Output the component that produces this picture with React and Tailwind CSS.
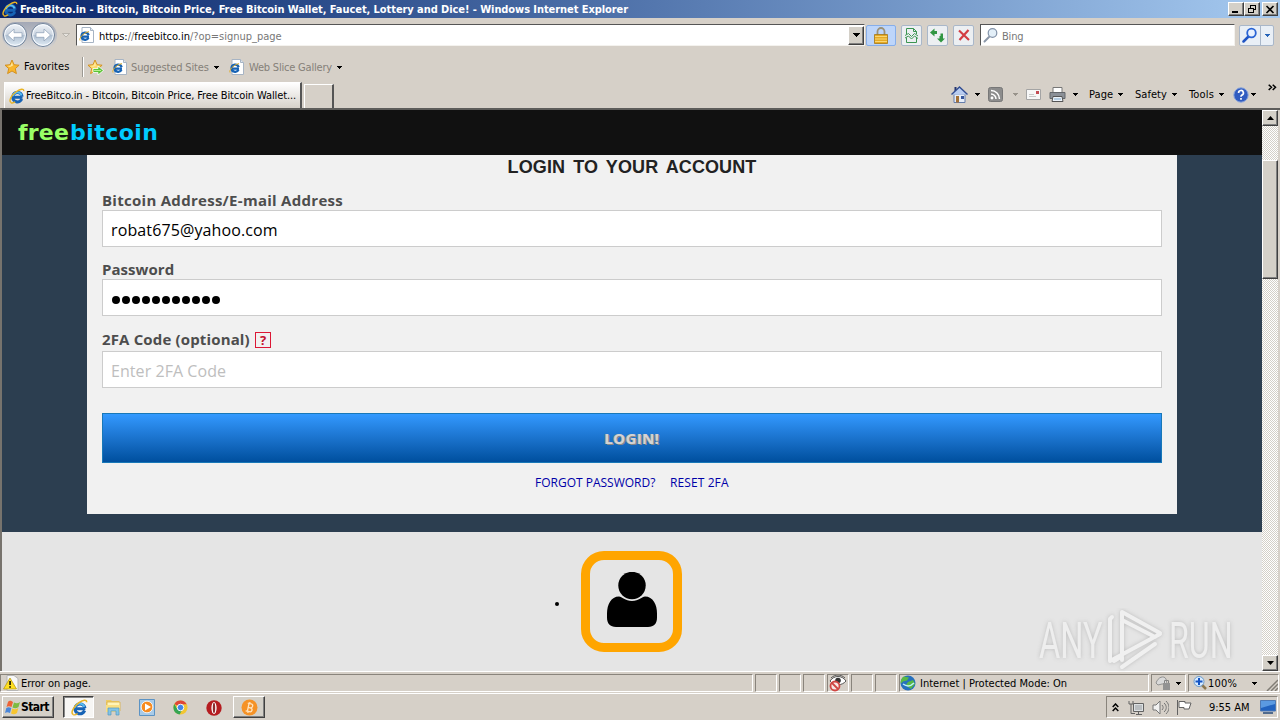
import React from "react";

const UI = "font-['DejaVu_Sans_Condensed','DejaVu_Sans',sans-serif] text-[11px] leading-[14px] whitespace-nowrap";

function IELogo({ size = 16 }) {
  return (
    <svg width={size} height={size} viewBox="0 0 16 16" fill="none" className="shrink-0">
      <path d="M13.500 9.200H5.200M13.100 8.600A4.700 4.700 0 0 0 3.800 8.600a4.700 4.700 0 0 0 9 2.400" stroke="#1763b5" strokeWidth="3" />
      <path d="M12.600 7.400A4.500 4.500 0 0 0 3.900 8.200" stroke="#58bdf2" strokeWidth="1.800" />
      <path d="M1.900 14.500C-.7 12.500 2.900 6.700 7.500 3.500 11.200.9 15 .2 14.700 3.100" stroke="#e9b425" strokeWidth="1.400" />
      <path d="M2 14.600c1 .7 3 0 4.200-.9" stroke="#e9b425" strokeWidth="1.300" />
    </svg>
  );
}

function PageIE() {
  return (
    <svg width="16" height="16" viewBox="0 0 16 16" fill="none" className="shrink-0">
      <path d="M3 .5h8.500l3 3v12H3z" fill="#fff" stroke="#a7b4c4" />
      <path d="M11.500.5v3h3" fill="#dfe7ef" stroke="#a7b4c4" />
      <path d="M10 9.600H3.600M9.700 8.200A3.700 3.700 0 0 0 2.500 9a3.700 3.700 0 0 0 7 1.800" stroke="#1763b5" strokeWidth="2.300" />
      <path d="M1 13.500C-.2 11.300 4 5.800 10 4.600" stroke="#e0ae2a" />
    </svg>
  );
}

function Caret({ color = "#000" }) {
  return (
    <svg width="5" height="3" viewBox="0 0 5 3" className="shrink-0" shapeRendering="crispEdges">
      <path d="M0 0h5L2.500 3z" fill={color} />
    </svg>
  );
}

function Star({ arrow }) {
  return (
    <svg width="17" height="17" viewBox="0 0 17 17" className="shrink-0">
      <path d="M8 1l2.100 4.700 5 .5-3.800 3.400 1.100 5L8 12l-4.400 2.600 1.100-5L1 6.200l5-.5z" fill={arrow ? "#fbd969" : "#f9b62d"} stroke="#d18b16" strokeWidth=".9" />
      <path d="M8 3l1 3.500-3 1.500-3-1 3.600-.5z" fill="#ffe89a" />
      {arrow && <path d="M6 9.500h5V7l5.500 4.500L11 16v-2.500H6z" fill="#5cc336" stroke="#fff" strokeWidth=".8" />}
      {arrow && <path d="M7 11.500h7" stroke="#b5ee90" />}
    </svg>
  );
}

function NavArrow({ flip }) {
  return (
    <svg width="26" height="26" viewBox="0 0 26 26" className={flip ? "rotate-180" : ""}>
      <defs>
        <linearGradient id={flip ? "navB" : "navA"} x1="0" y1={flip ? "1" : "0"} x2="0" y2={flip ? "0" : "1"}>
          <stop offset="0" stopColor="#f1f4f8" />
          <stop offset=".48" stopColor="#cbd5e1" />
          <stop offset=".52" stopColor="#b0c0d2" />
          <stop offset="1" stopColor="#e2edf6" />
        </linearGradient>
      </defs>
      <circle cx="13" cy="13" r="11.500" fill={flip ? "url(#navB)" : "url(#navA)"} stroke="#71839a" strokeWidth="1" />
      <circle cx="13" cy="13" r="10.300" fill="none" stroke="#f8fbff" strokeWidth="1" />
      <path d="M5.500 13l6.500-6v3.700h8v4.600h-8V19z" fill="#fff" stroke="#93a5ba" strokeWidth=".8" />
    </svg>
  );
}

function Magnifier({ blue }) {
  return (
    <svg width="16" height="16" viewBox="0 0 16 16" fill="none" className="shrink-0">
      <path d="M1.500 14.500l4.500-4.500" stroke={blue ? "#1f54c4" : "#8b97a8"} strokeWidth={blue ? "2.500" : "2"} strokeLinecap="round" />
      <circle cx="9.500" cy="6" r="4.300" fill={blue ? "#e8f1ff" : "#e3eff8"} stroke={blue ? "#2a64d4" : "#8292a8"} strokeWidth={blue ? "1.800" : "1.200"} />
    </svg>
  );
}

function ToolButton({ children, className = "w-[21px] border-[#a9b7c9] bg-[#eceff2]" }) {
  return (
    <div className={"flex h-[21px] shrink-0 items-center justify-center rounded-[2px] border " + className}>
      {children}
    </div>
  );
}

function WinButton({ children, className = "" }) {
  return (
    <div className={"flex shrink-0 items-center justify-center border border-t-white border-l-white border-r-[#404040] border-b-[#404040] bg-[#d4d0c8] shadow-[inset_-1px_-1px_0_#808080] " + className}>
      {children}
    </div>
  );
}

function TitleBar() {
  return (
    <div className="flex h-[18px] items-center bg-gradient-to-r from-[#0a246a] to-[#a6caf0] pl-[2px] pr-[2px]">
      <IELogo size={16} />
      <span className="ml-[2px] w-[700px] whitespace-nowrap pt-[1px] font-['DejaVu_Sans_Condensed','DejaVu_Sans',sans-serif] text-[11px] font-bold leading-[17px] tracking-[-0.07px] text-white">
        FreeBitco.in - Bitcoin, Bitcoin Price, Free Bitcoin Wallet, Faucet, Lottery and Dice! - Windows Internet Explorer
      </span>
      <div className="ml-auto flex">
        <WinButton className="h-[14px] w-[16px]">
          <svg width="12" height="10" viewBox="0 0 12 10"><path d="M2 7h6v2H2z" /></svg>
        </WinButton>
        <WinButton className="h-[14px] w-[16px]">
          <svg width="12" height="10" viewBox="0 0 12 10" fill="none" stroke="#000" shapeRendering="crispEdges">
            <path d="M4 1h6M4.500 1v3M9.500 1v5M7 5.500h3M2 4h6M2.500 4v5M7.500 4v5M2 8.500h6" />
          </svg>
        </WinButton>
        <WinButton className="ml-[2px] h-[14px] w-[16px]">
          <svg width="10" height="9" viewBox="0 0 10 9" stroke="#000" strokeWidth="1.600"><path d="M1.500 1l7 7M8.500 1l-7 7" /></svg>
        </WinButton>
      </div>
    </div>
  );
}

function AddressRow() {
  return (
    <div className="flex h-[34px] items-center pl-[2px] pr-[6px]">
      <div className="flex h-[27px] w-[55px] shrink-0 items-center rounded-full bg-gradient-to-b from-[#a3a8b6] to-[#d6d4d2]">
        <NavArrow />
        <div className="ml-[2px] flex"><NavArrow flip /></div>
      </div>
      <div className="ml-[5px] flex"><svg width="8" height="5" viewBox="0 0 8 5"><path d="M.5.5h7L4 4z" fill="#e6e3de" stroke="#a9a59e" strokeWidth=".7" /></svg></div>
      <div className="ml-[6px] flex h-[22px] w-[789px] shrink-0 items-center border border-t-[#555] border-l-[#555] border-r-[#f4f2ee] border-b-[#f4f2ee] bg-white pl-[2px]">
        <PageIE />
        <span className={UI + " ml-[4px] pt-[3px] text-black tracking-[-0.02px]"}>
          https:<span className="text-[#777]">//</span>freebitco.in<span className="text-[#777]">/?op=signup_page</span>
        </span>
        <WinButton className="ml-auto h-[19px] w-[16px]"><svg width="7" height="4" viewBox="0 0 7 4" shapeRendering="crispEdges"><path d="M0 0h7L3.500 4z" /></svg></WinButton>
      </div>
      <div className="ml-[1px] flex">
        <ToolButton className="w-[30px] border-[#86aeea] bg-[#bdd5fa]">
          <svg width="14" height="17" viewBox="0 0 14 17" fill="none">
            <path d="M3.500 8V4.500a3.500 3.500 0 0 1 7 0V8" stroke="#9b9178" strokeWidth="1.800" />
            <path d="M.5 7.500h13v9H.5z" fill="#e6aa24" stroke="#a37717" strokeWidth=".8" />
            <path d="M1 9.500h12M1 12h12M1 14.500h12" stroke="#f9d775" />
          </svg>
        </ToolButton>
      </div>
      <div className="ml-[5px] flex gap-[5px]">
        <ToolButton>
          <svg width="15" height="17" viewBox="0 0 15 17" fill="none" stroke="#3b9551">
            <path d="M2.500 7V1.500h7l3 3V7M9.500 1.500v3h3M2.500 10.500v5h10v-5" />
            <path d="M1 8.500l3.500-2 3 3 3-3 3.500 2.500M1 11l3.500-2 3 3 3-3 3.500 2.500" />
          </svg>
        </ToolButton>
        <ToolButton>
          <svg width="16" height="15" viewBox="0 0 16 15" fill="#309642">
            <path d="M0 4.500L4.500.5v2.500h2.500v3h-2.500v2.500zM15 10.500l-4 4-4-4h2.500V8h1V5.500h2.500v5z" />
          </svg>
        </ToolButton>
        <ToolButton>
          <svg width="12" height="12" viewBox="0 0 12 12" fill="none"><path d="M1 1.500l10 9.500M10.500 1L1.500 11" stroke="#d33c43" strokeWidth="2.200" /></svg>
        </ToolButton>
      </div>
      <div className="ml-[6px] flex h-[22px] w-[255px] shrink-0 items-center border border-t-[#555] border-l-[#555] border-r-[#f4f2ee] border-b-[#f4f2ee] bg-white pl-[2px]">
        <Magnifier />
        <span className={UI + " ml-[3px] pt-[3px] text-[#777] tracking-[-0.2px]"}>Bing</span>
      </div>
      <div className="ml-auto flex h-[21px] w-[35px] rounded-[2px] border border-[#a9b7c9] bg-[#e9eff6]">
        <div className="flex w-[21px] items-center justify-center border-r border-[#a9b7c9]"><Magnifier blue /></div>
        <div className="flex flex-1 items-center justify-center"><Caret color="#2563b8" /></div>
      </div>
    </div>
  );
}

function FavoritesRow() {
  return (
    <div className="flex h-[30px] items-center pl-[4px]">
      <Star />
      <span className={UI + " ml-[3px] w-[58px] tracking-[0.1px] text-black"}>Favorites</span>
      <div className="h-[20px] w-[2px] border-l border-r border-l-[#9b9892] border-r-white" />
      <div className="ml-[3px] flex w-[25px]"><Star arrow /></div>
      <PageIE />
      <span className={UI + " ml-[3px] w-[83px] pt-[1px] tracking-[-0.14px] text-[#858079]"}>Suggested Sites</span>
      <div className="flex w-[15px]"><Caret /></div>
      <PageIE />
      <span className={UI + " ml-[4px] w-[88px] pt-[1px] tracking-[-0.2px] text-[#858079]"}>Web Slice Gallery</span>
      <Caret />
    </div>
  );
}

function TabRow() {
  return (
    <div className="flex h-[26px] items-end pl-[4px]">
      <div className="flex h-[26px] w-[298px] items-center border-l border-t border-r-2 border-l-white border-t-white border-r-[#555] bg-gradient-to-b from-white to-[#d6d1ca] pl-[4px]">
        <IELogo size={16} />
        <span className={UI + " ml-[1px] pt-[1px] tracking-[-0.105px] text-black"}>FreeBitco.in - Bitcoin, Bitcoin Price, Free Bitcoin Wallet...</span>
      </div>
      <div className="ml-[2px] h-[24px] w-[30px] border-l border-t border-r-2 border-l-white border-t-white border-r-[#555]" />
      <div className="ml-auto flex h-[25px] w-[329px] items-center self-start">
        <div className="flex w-[24px]">
          <svg width="17" height="17" viewBox="0 0 17 17">
            <path d="M3 8h11v8.500H3z" fill="#e6edf8" stroke="#647dab" />
            <path d="M3.500 1h2v4h-2z" fill="#25356f" />
            <path d="M.5 8.500L8.500 1l8 7.500" fill="#b9cdf1" stroke="#314c91" strokeWidth="1.400" />
            <path d="M5 10h3v6.500H5z" fill="#a47137" /><path d="M10 10h3v3h-3z" fill="#37569c" />
          </svg>
        </div>
        <div className="flex w-[13px]"><Caret /></div>
        <div className="flex w-[25px]">
          <svg width="15" height="15" viewBox="0 0 15 15" fill="none" stroke="#fff" strokeWidth="1.500">
            <rect x=".5" y=".5" width="14" height="14" rx="2" fill="#8c8c8c" stroke="#777" strokeWidth="1" />
            <path d="M3 7a5 5 0 0 1 5 5M3 3.500a8.500 8.500 0 0 1 8.500 8.500" /><circle cx="4" cy="11" r=".7" />
          </svg>
        </div>
        <div className="flex w-[13px]"><Caret color="#98938b" /></div>
        <div className="flex w-[23px]">
          <svg width="15" height="11" viewBox="0 0 15 11"><path d="M.5.500h14v10H.5z" fill="#f7f7f7" stroke="#a4a4a4" /><path d="M10 2h3v3h-3z" fill="#c34b53" /><path d="M3 5.500h5M3 7.500h7" stroke="#c7c7c7" /></svg>
        </div>
        <div className="flex w-[24px]">
          <svg width="17" height="16" viewBox="0 0 17 16"><path d="M4 .5h9v6H4z" fill="#fff" stroke="#777" /><path d="M1 5.500h15v6H1z" fill="#8b9097" stroke="#63666a" /><path d="M4 9.500h9l1 5H3z" fill="#edf4fa" stroke="#555" /><path d="M5 12h7" stroke="#7fa7cb" /></svg>
        </div>
        <div className="flex w-[16px]"><Caret /></div>
        <span className={UI + " w-[29px] pt-[1px] tracking-[0.1px]"}>Page</span><div className="flex w-[17px]"><Caret /></div>
        <span className={UI + " w-[37px] pt-[1px] tracking-[0.05px]"}>Safety</span><div className="flex w-[17px]"><Caret /></div>
        <span className={UI + " w-[30px] pt-[1px] tracking-[0.15px]"}>Tools</span><div className="flex w-[14px]"><Caret /></div>
        <div className="flex w-[18px]">
          <svg width="16" height="16" viewBox="0 0 16 16" fill="none"><circle cx="8" cy="8" r="7.200" fill="#315cc0" stroke="#8aa5dc" /><path d="M5.600 6a2.400 2.400 0 1 1 3.300 2.100c-.8.4-.9.800-.9 1.700M8 11v1.800" stroke="#fff" strokeWidth="1.700" /></svg>
        </div>
        <div className="flex w-[17px]"><Caret /></div>
        <div className="flex h-full pt-[2px]"><svg width="9" height="7" viewBox="0 0 9 7" fill="none" stroke="#000" strokeWidth="1.500"><path d="M.7.7l2.800 2.600L.7 6M4.700.7l2.800 2.600L4.700 6" /></svg></div>
      </div>
    </div>
  );
}

const LABEL = "font-['Open_Sans','Noto_Sans',sans-serif] text-[15px] font-bold text-[#4d4d4d] whitespace-nowrap";
const INPUT = "flex h-[37px] items-center border border-[#ccc] bg-white font-['Open_Sans','Noto_Sans',sans-serif] text-[16px]";

function LoginPanel() {
  return (
    <div className="mx-[85px] flex h-[359px] flex-col bg-[#f1f1f1] px-[15px]">
      <h1 className="h-[36px] whitespace-nowrap text-center font-['Liberation_Sans',Arial,sans-serif] text-[18px] font-bold leading-[24px] tracking-[0.1px] text-[#222] [word-spacing:3px]">LOGIN TO YOUR ACCOUNT</h1>
      <div className={LABEL + " h-[19px] leading-[18px] tracking-[0.28px]"}>Bitcoin Address/E-mail Address</div>
      <div className={INPUT + " pl-[8px] pt-[3px] text-black tracking-[0.12px]"}>robat675@yahoo.com</div>
      <div className={LABEL + " mt-[14px] h-[18px] leading-[16px] tracking-[0.05px]"}>Password</div>
      <div className={INPUT + " gap-[2px] pl-[9px] pt-[4px]"}>
        {Array.from({ length: 11 }, (_, i) => <span key={i} className="h-[8px] w-[8px] rounded-full bg-black" />)}
      </div>
      <div className="mt-[15px] flex h-[20px]">
        <span className={LABEL + " w-[153px] leading-[16px] tracking-[0.15px]"}>2FA Code (optional)</span>
        <span className="mt-[1px] flex h-[16px] w-[16px] items-center justify-center border border-[#dc1735] font-['Open_Sans','Noto_Sans',sans-serif] text-[13px] font-bold leading-none text-[#c41230]">?</span>
      </div>
      <div className={INPUT + " pl-[8px] pt-[3px] text-[#bebebe] tracking-[0.06px]"}>Enter 2FA Code</div>
      <div className="mt-[25px] flex h-[50px] items-center justify-center border border-[#1878b8] bg-gradient-to-b from-[#3399ff] to-[#004f9e] pt-[1px] font-['Open_Sans','Noto_Sans',sans-serif] text-[15px] font-bold tracking-[0.4px] text-[#d4d4d4] [text-shadow:1px_1px_0_#888,-1px_0_0_#999]">LOGIN!</div>
      <div className="mt-[10px] flex justify-center whitespace-nowrap font-['Open_Sans','Noto_Sans',sans-serif] text-[12px] leading-[19px] text-[#0000a8]">
        <span className="w-[135px]">FORGOT PASSWORD?</span><span className="w-[59px] tracking-[0.1px]">RESET 2FA</span>
      </div>
    </div>
  );
}

function Watermark() {
  return (
    <svg width="200" height="64" viewBox="0 0 200 64" className="absolute right-[26px] top-[76px]" fill="none">
      <g className="[filter:drop-shadow(0_0_2px_#b4b4b4)]" fontFamily="Roboto" fontWeight="400" fill="#f0f0f0" opacity=".85">
        <text transform="translate(3 50) scale(.6 1)" fontSize="50" textLength="106" lengthAdjust="spacingAndGlyphs">ANY</text>
        <text transform="translate(133 50) scale(.6 1)" fontSize="50" textLength="106" lengthAdjust="spacingAndGlyphs">RUN</text>
        <path d="M86 52V4l38 21-5 4-33-17M76 9l-2 2v42l50-27M78 53l8-5M86 59l33-23" fill="none" stroke="#f3f3f3" strokeWidth="4" strokeLinejoin="round" strokeLinecap="round" />
      </g>
    </svg>
  );
}

function Page() {
  return (
    <div className="relative flex w-[1260px] flex-col">
      <header className="flex h-[45px] items-center bg-[#111] pl-[16px] font-['DejaVu_Sans',sans-serif] text-[22px] font-bold leading-none">
        <span className="w-[52px] text-[#99ff66] tracking-[0.2px]">free</span><span className="text-[#0cf] tracking-[0.45px]">bitcoin</span>
      </header>
      <div className="h-[377px] bg-[#2c3e50]"><LoginPanel /></div>
      <div className="relative flex h-[139px] items-start bg-[#e5e5e5] pl-[553px] pt-[19px]">
        <span className="mt-[51px] h-[4px] w-[4px] rounded-full bg-black" />
        <div className="ml-[22px] flex h-[101px] w-[101px] justify-center rounded-[23px] border-[9px] border-[#ffa500] pt-[12px]">
          <svg width="50" height="56" viewBox="0 0 50 56"><circle cx="25" cy="13.500" r="13.700" /><path d="M12 24.500c3 0 6 4.500 13 4.500s10-4.500 13-4.500c8 0 12 8 12 17v4c0 6-3 9.500-9 9.500H9c-6 0-9-3.500-9-9.500v-4c0-9 4-17 12-17z" /></svg>
        </div>
        <Watermark />
      </div>
    </div>
  );
}

function ScrollBar() {
  return (
    <div className="flex w-[16px] flex-col bg-[repeating-conic-gradient(#fff_0%_25%,#d4d0c8_0%_50%)] bg-[length:2px_2px]">
      <WinButton className="h-[16px] w-[16px]"><svg width="7" height="4" viewBox="0 0 7 4"><path d="M0 4h7L3.500 0z" /></svg></WinButton>
      <WinButton className="mt-[34px] h-[119px] w-[16px]" />
      <WinButton className="mt-auto h-[16px] w-[16px]"><svg width="7" height="4" viewBox="0 0 7 4"><path d="M0 0h7L3.500 4z" /></svg></WinButton>
    </div>
  );
}

function Pane({ className = "", children }) {
  return <div className={"flex h-[18px] shrink-0 items-center border border-t-[#89847c] border-l-[#89847c] border-r-white border-b-white " + className}>{children}</div>;
}

function StatusBar() {
  return (
    <div className="flex h-[22px] items-start border-t border-white pt-[2px]">
      <Pane className="w-[753px] pl-[2px]">
        <svg width="16" height="16" viewBox="0 0 16 16"><path d="M4 .5h7l4 3v12H4z" fill="#f8f8f8" stroke="#b6b6b6" /><path d="M7 3l6.500 11H.5z" fill="#ffdf20" stroke="#b99a16" strokeWidth=".8" /><path d="M6.300 6h1.500v4H6.300zM6.300 11.200h1.500v1.500H6.300z" /></svg>
        <span className={UI + " ml-[2px] pt-[1px] tracking-[-0.05px]"}>Error on page.</span>
      </Pane>
      <Pane className="ml-[2px] w-[22px]" /><Pane className="ml-[2px] w-[22px]" /><Pane className="ml-[2px] w-[22px]" />
      <Pane className="ml-[2px] w-[22px] justify-center">
        <svg width="18" height="17" viewBox="0 0 18 17" fill="none"><path d="M1 6c4-6 12-6 16 0-4 5-12 5-16 0z" fill="#fff" stroke="#555" /><circle cx="9" cy="5.500" r="2.800" fill="#333" /><path d="M2 3c4-4 10-4 14 0" stroke="#555" /><circle cx="6" cy="11" r="4.500" fill="#f7e7e5" stroke="#cf4542" strokeWidth="1.800" /><path d="M3 8l6 6" stroke="#cf4542" strokeWidth="1.800" /></svg>
      </Pane>
      <Pane className="ml-[2px] w-[22px]" /><Pane className="ml-[2px] w-[22px]" />
      <Pane className="ml-[2px] w-[250px] pl-[0px]">
        <svg width="16" height="16" viewBox="0 0 16 16"><circle cx="8" cy="8" r="7.500" fill="#2670bd" /><path d="M4 1.500l5 1-2 3-4 1-2 2C0 6 2 2 4 1.500zM8 7l5-2 2 4-4 5-3-2-2-2z" fill="#58b846" /><path d="M3 9c4 3 8 2 11-1" fill="none" stroke="#bdf0fc" strokeWidth="1.500" /></svg>
        <span className={UI + " ml-[4px] pt-[1px] tracking-[0.01px]"}>Internet | Protected Mode: On</span>
      </Pane>
      <Pane className="ml-[2px] w-[35px] pl-[3px]">
        <svg width="17" height="15" viewBox="0 0 17 15" fill="#b2b2b2"><path d="M1 7c2-6 8-8 10-4l1 5H7L3 9z" stroke="#919191" fill="#d9d9d9" /><path d="M8 7h7v7H8z" fill="#929292" /><path d="M9.500 7V4.500h4V7" fill="none" stroke="#848484" /></svg>
        <div className="ml-[4px] flex"><Caret /></div>
      </Pane>
      <Pane className="ml-[2px] w-[91px] pl-[4px]">
        <svg width="15" height="15" viewBox="0 0 15 15"><path d="M9 9l4 4" stroke="#8d7750" strokeWidth="2.500" /><circle cx="6" cy="5.500" r="5" fill="#d8ebff" stroke="#6c9ccc" /><path d="M6 2v7M2.500 5.500h7" stroke="#1454c4" strokeWidth="2" /></svg>
        <span className={UI + " w-[44px] pt-[1px] tracking-[0.2px]"}>100%</span><Caret />
        <div className="ml-auto flex h-full items-end"><svg width="13" height="14" viewBox="0 0 13 14" stroke="#817d76" strokeWidth="1.500"><path d="M2 14L13 3M6 14l7-7M10 14l3-3" /></svg></div>
      </Pane>
    </div>
  );
}

function TaskBar() {
  return (
    <div className="flex h-[27px] items-start border-t border-white pl-[2px] pr-[2px] pt-[2px]">
      <WinButton className="h-[22px] w-[52px]">
        <svg width="16" height="15" viewBox="0 0 16 15"><path d="M3 2c2-2 3-1 5 0L6.500 7C4.500 6 3 6 1.500 7z" fill="#ed6336" /><path d="M9 2.500c2 1 4 1 6-.5l-1.500 5c-2 1.500-4 1.500-6 .5z" fill="#7dbb42" /><path d="M1.300 8c2-1.300 3-1 5 0L5 13c-2-1-3.500-1-5 0z" fill="#4a86d9" /><path d="M7.300 8.500c2 1 4 1 6-.5L12 13c-2 1.500-4 1.500-6 .5z" fill="#f7c52f" /></svg>
        <span className="mr-[2px] font-['DejaVu_Sans_Condensed','DejaVu_Sans',sans-serif] text-[12px] font-bold leading-[14px] tracking-[-0.55px]">Start</span>
      </WinButton>
      <div className="ml-[9px] flex h-[22px] w-[31px] items-center justify-center border border-t-[#404040] border-l-[#404040] border-r-white border-b-white bg-[#f7f6f4] pl-[2px] shadow-[inset_1px_1px_0_#888]"><IELogo size={17} /></div>
      <div className="ml-[11px] mt-[3px] flex w-[34px]">
        <svg width="17" height="17" viewBox="0 0 17 17"><path d="M1 3V1h5l1 1h7v11H1z" fill="#edcb65" /><path d="M2 3h13v9H2z" fill="#fff4b8" stroke="#d9ae48" strokeWidth=".8" /><path d="M1 6h14v7H1z" fill="#f9df83" /><path d="M3 16V9h11v7h-3v-4H6v4z" fill="#83c4e6" stroke="#5499bf" strokeWidth=".7" /></svg>
      </div>
      <div className="mt-[3px] flex w-[34px]">
        <svg width="16" height="17" viewBox="0 0 16 17"><path d="M.5.5h15v16H.5z" fill="#a9cbe8" stroke="#5c93c4" /><circle cx="8" cy="8" r="5.800" fill="#f78b20" stroke="#fff" strokeWidth=".8" /><path d="M6 4.500l6 3.500-6 3.500z" fill="#fff" /></svg>
      </div>
      <div className="mt-[4px] flex w-[33px]">
        <svg width="15" height="15" viewBox="0 0 16 16"><circle cx="8" cy="8" r="7.500" fill="#f2c633" /><path d="M8 8L1.500 4.200A7.500 7.500 0 0 1 14.600 4.500H8z" fill="#df4638" /><path d="M1.500 4.200A7.500 7.500 0 0 0 7 15.500l3.500-6.200L8 8 4.500 9.500z" fill="#36a553" /><circle cx="8" cy="8" r="3.500" fill="#4285e8" stroke="#fff" /></svg>
      </div>
      <div className="mt-[4px] flex w-[27px]">
        <svg width="16" height="16" viewBox="0 0 16 16"><circle cx="8" cy="8" r="7.700" fill="#b51c20" /><ellipse cx="8" cy="8" rx="2.600" ry="6" fill="#fff" /><ellipse cx="8" cy="8" rx="1.200" ry="5.200" fill="#8e2a2d" /></svg>
      </div>
      <WinButton className="h-[22px] w-[32px]">
        <svg width="17" height="17" viewBox="0 0 17 17" fill="none"><circle cx="8.500" cy="8.500" r="8" fill="#f59226" /><path d="M6 4.500h3.500c2.500 0 2.500 3.500 0 4H7m2.500 0c3 .2 2.700 4 0 4H5.500M7.300 4.500v8M8 3v2M8 12v2" stroke="#ffe3bf" strokeWidth="1.300" transform="rotate(12 8 8)" /></svg>
      </WinButton>
      <div className="ml-auto flex h-[22px] w-[172px] items-center border border-t-[#89847c] border-l-[#89847c] border-r-white border-b-white pl-[5px]">
        <div className="flex w-[16px]"><svg width="7" height="9" viewBox="0 0 7 9" fill="none" stroke="#000" strokeWidth="1.500"><path d="M.7 4l2.800-3 2.800 3M.7 8l2.800-3 2.800 3" /></svg></div>
        <div className="flex w-[24px]"><svg width="16" height="15" viewBox="0 0 16 15" fill="none" stroke="#626262"><path d="M5.500 3.500h10v8h-10z" fill="#dce0e2" /><path d="M7 5h7v5H7z" fill="#b9bdc0" stroke="none" /><path d="M8 14.500h6M10.500 12v2M1 1v3h4V1M3 4v9.500h4" /></svg></div>
        <div className="flex w-[24px]"><svg width="17" height="15" viewBox="0 0 17 15" fill="none" stroke="#777"><path d="M1 5h3l4-4v13l-4-4H1z" fill="#f1f1f1" /><path d="M10 5c1.500 1.500 1.500 3.500 0 5M12 3c3 2.500 3 6.500 0 9M14 1c4 4 4 9 0 13" /></svg></div>
        <div className="flex w-[33px]"><svg width="16" height="16" viewBox="0 0 16 16" fill="none" stroke="#626262"><path d="M1.500 1v15M3 2.500h6v1.500h6l-2 6H8V8.500H3z" fill="#fff" /></svg></div>
        <span className={UI + " w-[51px] pt-[1px] tracking-[-0.02px]"}>9:55 AM</span>
        <svg width="16" height="14" viewBox="0 0 16 14"><path d="M.5.500h15v10.500H.5z" fill="#2263bf" stroke="#4e79b3" /><path d="M1 1h14v3L1 8z" fill="#5b9ae1" /><path d="M3 13h10" stroke="#516b8d" strokeWidth="2" /></svg>
      </div>
    </div>
  );
}

export default function App() {
  return (
    <div className="flex h-[720px] w-[1280px] flex-col overflow-hidden bg-[#d6d0c8] text-black">
      <TitleBar />
      <AddressRow />
      <FavoritesRow />
      <TabRow />
      <div className="flex h-[563px] border-t-2 border-l-2 border-t-[#5d5c5a] border-l-[#77736d] pr-[2px]">
        <Page />
        <ScrollBar />
      </div>
      <StatusBar />
      <TaskBar />
    </div>
  );
}
